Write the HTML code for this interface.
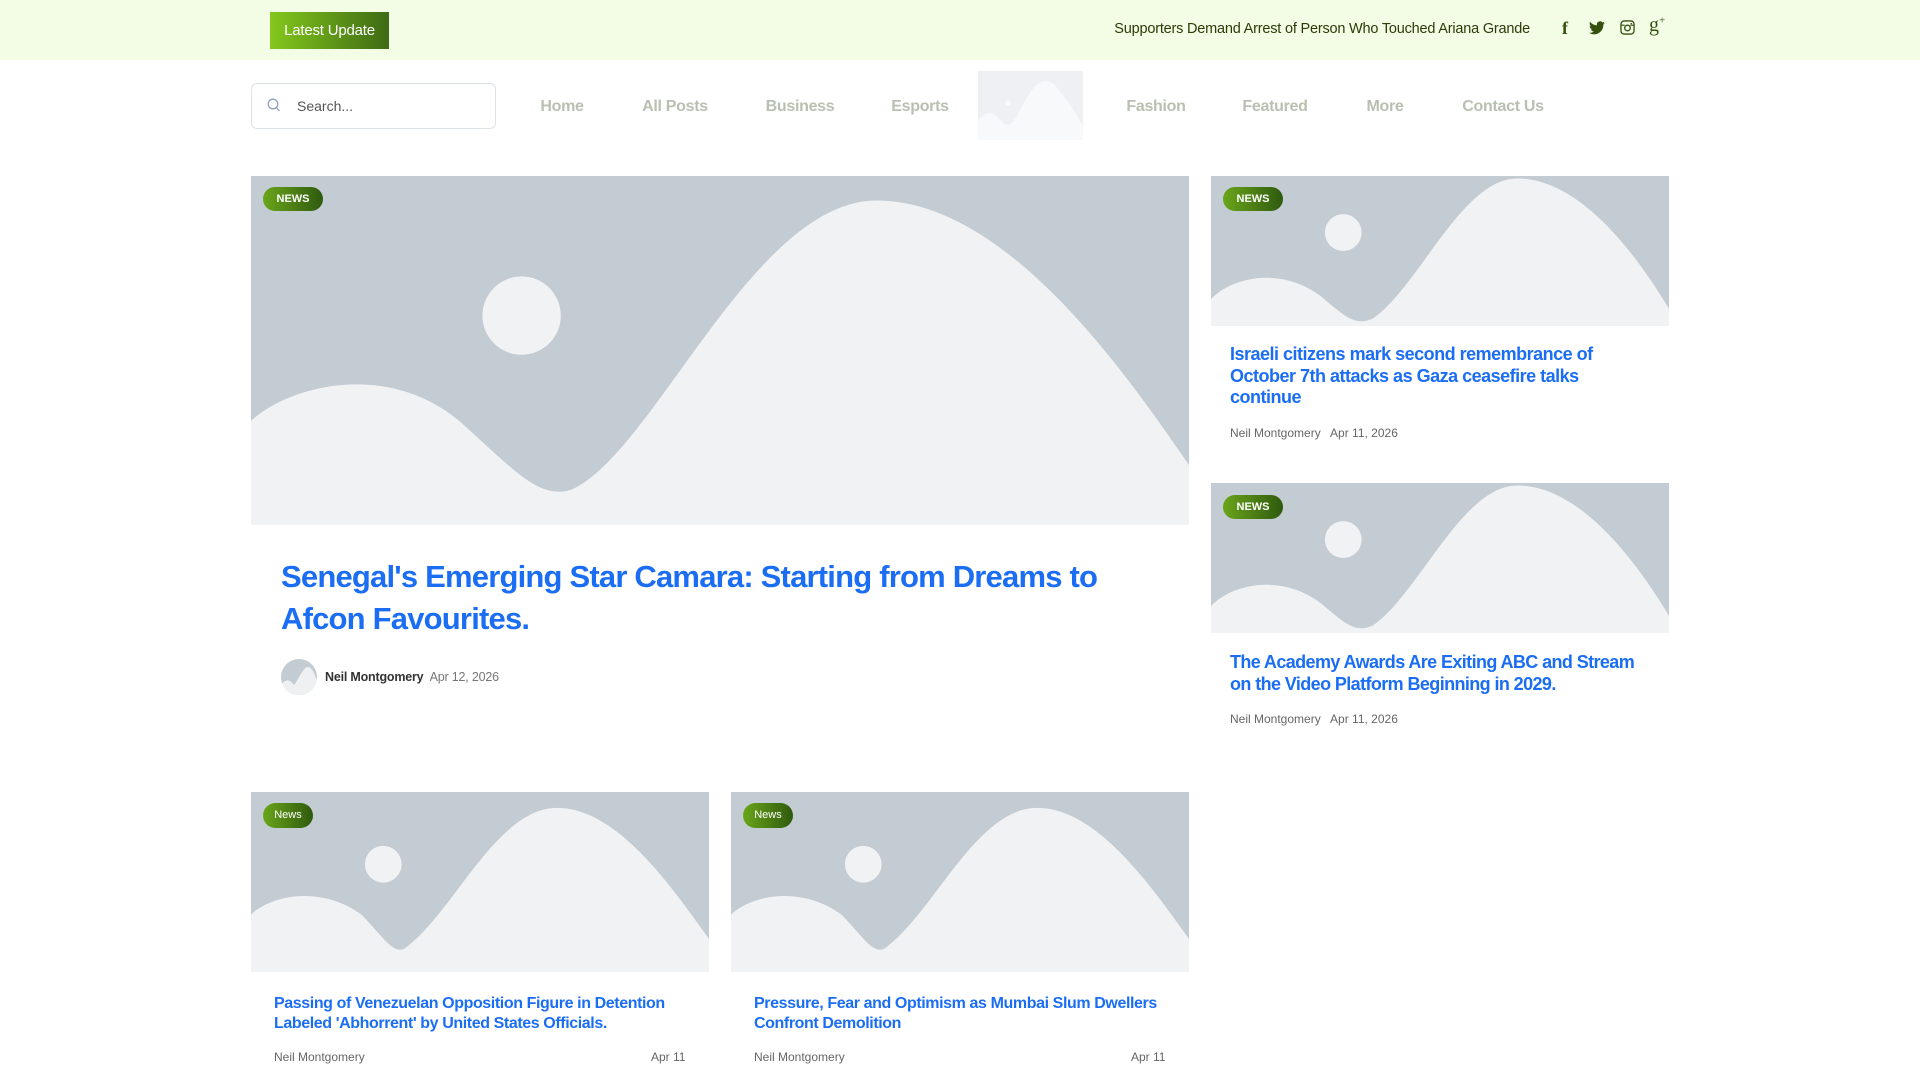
<!DOCTYPE html>
<html><head><meta charset="utf-8"><style>
*{margin:0;padding:0;box-sizing:border-box}
body{width:1920px;height:1080px;overflow:hidden;background:#fff;font-family:"Liberation Sans",Arial,sans-serif;position:relative}
.abs{position:absolute}
.top{left:0;top:0;width:1920px;height:60px;background:#f3fde6}
.btn{left:270px;top:12px;width:119px;height:37px;background:linear-gradient(90deg,#84c81c,#3e6a14);color:#fff;font-size:15px;line-height:37px;text-align:center;letter-spacing:-0.2px}
.tick{right:390px;top:21px;font-size:14.5px;color:#2c3c08;letter-spacing:-0.2px}
.ic{top:20px;color:#34500f;font-size:16px;font-weight:bold}
.search{left:251px;top:83px;width:245px;height:46px;border:1px solid #dde2e8;border-radius:6px}
.search span{position:absolute;left:45px;top:14px;font-size:14px;color:#555}
.nav{top:98px;font-size:16px;font-weight:bold;color:#b9c0b2;transform:translateX(-50%);white-space:nowrap;letter-spacing:-0.3px}
.ph{background:#c3cbd3;overflow:hidden}
.ph svg{display:block;width:100%;height:100%}
.badge{background:linear-gradient(90deg,#6aa51a,#2f5a0e);color:#fff;font-weight:bold;border-radius:14px;text-align:center}
.t{color:#1b6ef3;font-weight:bold;letter-spacing:-0.35px}
.meta{font-size:12px;color:#666}
</style></head><body>
<div class="abs top"></div>
<div class="abs btn">Latest Update</div>
<div class="abs tick">Supporters Demand Arrest of Person Who Touched Ariana Grande</div>
<div class="abs ic" style="left:1562px;font-family:'Liberation Serif',serif;font-size:18px;top:18px">f</div>
<svg class="abs" style="left:1589px;top:21px" width="16" height="14" viewBox="0 0 24 20"><path fill="#34500f" d="M24 2.4a10 10 0 0 1-2.8.8A5 5 0 0 0 23.3.4a10 10 0 0 1-3.1 1.2A4.9 4.9 0 0 0 11.8 6 14 14 0 0 1 1.7.9a4.9 4.9 0 0 0 1.5 6.6A4.9 4.9 0 0 1 1 6.9a4.9 4.9 0 0 0 3.9 4.9 5 5 0 0 1-2.2.1 4.9 4.9 0 0 0 4.6 3.4A9.9 9.9 0 0 1 0 17.3 14 14 0 0 0 7.5 19.5c9 0 14-7.5 14-14v-.6A10 10 0 0 0 24 2.4z"/></svg>
<svg class="abs" style="left:1620px;top:20px" width="15" height="15" viewBox="0 0 16 16"><rect x="1" y="1" width="14" height="14" rx="3.5" fill="none" stroke="#34500f" stroke-width="1.4"/><circle cx="8" cy="8.5" r="3" fill="none" stroke="#34500f" stroke-width="1.4"/><path d="M1 5.5h4M11 5.5h4" stroke="#34500f" stroke-width="1.2"/><circle cx="12" cy="3.8" r=".8" fill="#34500f"/></svg>
<div class="abs ic" style="left:1649px;font-family:'Liberation Serif',serif;font-size:20px;top:14px;font-weight:normal">g<sup style="font-size:11px">+</sup></div>

<div class="abs search"><svg class="abs" style="left:15px;top:14px" width="14" height="16" viewBox="0 0 14 16"><circle cx="6" cy="6" r="4.8" fill="none" stroke="#8fa3c0" stroke-width="1.3"/><path d="M9.5 9.5l3 3.5" stroke="#8fa3c0" stroke-width="1.3"/></svg><span>Search...</span></div>
<div class="abs nav" style="left:562px">Home</div>
<div class="abs nav" style="left:675px">All Posts</div>
<div class="abs nav" style="left:800px">Business</div>
<div class="abs nav" style="left:920px">Esports</div>
<div class="abs" style="left:978px;top:71px;width:105px;height:69px;background:#eef0f3;overflow:hidden"><svg width="105" height="69" viewBox="0 0 105 69"><path d="M0 50 C10 35 20 45 25 52 C35 60 40 40 50 25 C60 8 70 5 80 18 C90 30 100 45 105 55 L105 69 L0 69Z" fill="#f8f9fa"/><circle cx="30" cy="32" r="3" fill="#f8f9fa"/></svg></div>
<div class="abs nav" style="left:1156px">Fashion</div>
<div class="abs nav" style="left:1275px">Featured</div>
<div class="abs nav" style="left:1385px">More</div>
<div class="abs nav" style="left:1503px">Contact Us</div>

<div class="abs ph" style="left:251px;top:176px;width:938px;height:349px"><svg viewBox="0 0 766 285" preserveAspectRatio="none"><path d="M0 200 C30 172 110 150 170 200 C215 240 235 265 262 256 C330 225 410 20 511 20 C620 20 720 170 766 236 L766 285 L0 285Z" fill="#f1f2f4"/><circle cx="221" cy="114" r="32" fill="#f1f2f4"/></svg></div>
<div class="abs badge" style="left:263px;top:187px;width:60px;height:24px;font-size:11px;line-height:24px">NEWS</div>
<div class="abs t" style="left:281px;top:556px;width:880px;font-size:31px;line-height:42px;letter-spacing:-0.8px">Senegal's Emerging Star Camara: Starting from Dreams to Afcon Favourites.</div>
<div class="abs" style="left:281px;top:659px;width:36px;height:36px;border-radius:50%;overflow:hidden;background:#c3cbd3"><svg width="36" height="36" viewBox="0 0 36 36"><path d="M0 26 C6 18 10 22 13 26 C18 20 22 8 27 8 C31 8 34 16 36 22 L36 36 L0 36Z" fill="#eef0f2"/></svg></div>
<div class="abs" style="left:325px;top:670px;font-size:12.5px;font-weight:bold;color:#333;letter-spacing:-0.2px">Neil Montgomery <span style="font-weight:normal;color:#777;margin-left:3px">Apr 12, 2026</span></div>

<div class="abs ph" style="left:1211px;top:176px;width:458px;height:150px"><svg viewBox="0 0 374 122" preserveAspectRatio="none"><path d="M0 100 C20 80 60 75 90 98 C110 115 118 122 132 116 C170 90 205 2 250 2 C300 2 345 60 374 108 L374 122 L0 122Z" fill="#f1f2f4"/><circle cx="108" cy="46" r="15" fill="#f1f2f4"/></svg></div>
<div class="abs badge" style="left:1223px;top:187px;width:60px;height:24px;font-size:11px;line-height:24px">NEWS</div>
<div class="abs t" style="left:1230px;top:344px;width:420px;font-size:18px;line-height:21.5px;letter-spacing:-0.5px">Israeli citizens mark second remembrance of October 7th attacks as Gaza ceasefire talks continue</div>
<div class="abs meta" style="left:1230px;top:426px">Neil Montgomery&nbsp;&nbsp; Apr 11, 2026</div>

<div class="abs ph" style="left:1211px;top:483px;width:458px;height:150px"><svg viewBox="0 0 374 122" preserveAspectRatio="none"><path d="M0 100 C20 80 60 75 90 98 C110 115 118 122 132 116 C170 90 205 2 250 2 C300 2 345 60 374 108 L374 122 L0 122Z" fill="#f1f2f4"/><circle cx="108" cy="46" r="15" fill="#f1f2f4"/></svg></div>
<div class="abs badge" style="left:1223px;top:495px;width:60px;height:24px;font-size:11px;line-height:24px">NEWS</div>
<div class="abs t" style="left:1230px;top:652px;width:410px;font-size:18px;line-height:21.5px;letter-spacing:-0.6px">The Academy Awards Are Exiting ABC and Stream on the Video Platform Beginning in 2029.</div>
<div class="abs meta" style="left:1230px;top:712px">Neil Montgomery&nbsp;&nbsp; Apr 11, 2026</div>

<div class="abs ph" style="left:251px;top:792px;width:458px;height:180px"><svg viewBox="0 0 374 147" preserveAspectRatio="none"><path d="M0 100 C20 82 60 78 90 100 C108 118 115 132 125 128 C165 100 200 13 250 13 C300 13 345 80 374 120 L374 147 L0 147Z" fill="#f1f2f4"/><circle cx="108" cy="59" r="15" fill="#f1f2f4"/></svg></div>
<div class="abs badge" style="left:263px;top:803px;width:50px;height:25px;font-size:11px;line-height:25px;font-weight:normal">News</div>
<div class="abs t" style="left:274px;top:994px;width:420px;font-size:16px;line-height:20px;letter-spacing:-0.4px">Passing of Venezuelan Opposition Figure in Detention Labeled 'Abhorrent' by United States Officials.</div>
<div class="abs meta" style="left:274px;top:1050px">Neil Montgomery</div>
<div class="abs meta" style="left:651px;top:1050px">Apr 11</div>

<div class="abs ph" style="left:731px;top:792px;width:458px;height:180px"><svg viewBox="0 0 374 147" preserveAspectRatio="none"><path d="M0 100 C20 82 60 78 90 100 C108 118 115 132 125 128 C165 100 200 13 250 13 C300 13 345 80 374 120 L374 147 L0 147Z" fill="#f1f2f4"/><circle cx="108" cy="59" r="15" fill="#f1f2f4"/></svg></div>
<div class="abs badge" style="left:743px;top:803px;width:50px;height:25px;font-size:11px;line-height:25px;font-weight:normal">News</div>
<div class="abs t" style="left:754px;top:994px;width:430px;font-size:16px;line-height:20px;letter-spacing:-0.4px">Pressure, Fear and Optimism as Mumbai Slum Dwellers Confront Demolition</div>
<div class="abs meta" style="left:754px;top:1050px">Neil Montgomery</div>
<div class="abs meta" style="left:1131px;top:1050px">Apr 11</div>
</body></html>
